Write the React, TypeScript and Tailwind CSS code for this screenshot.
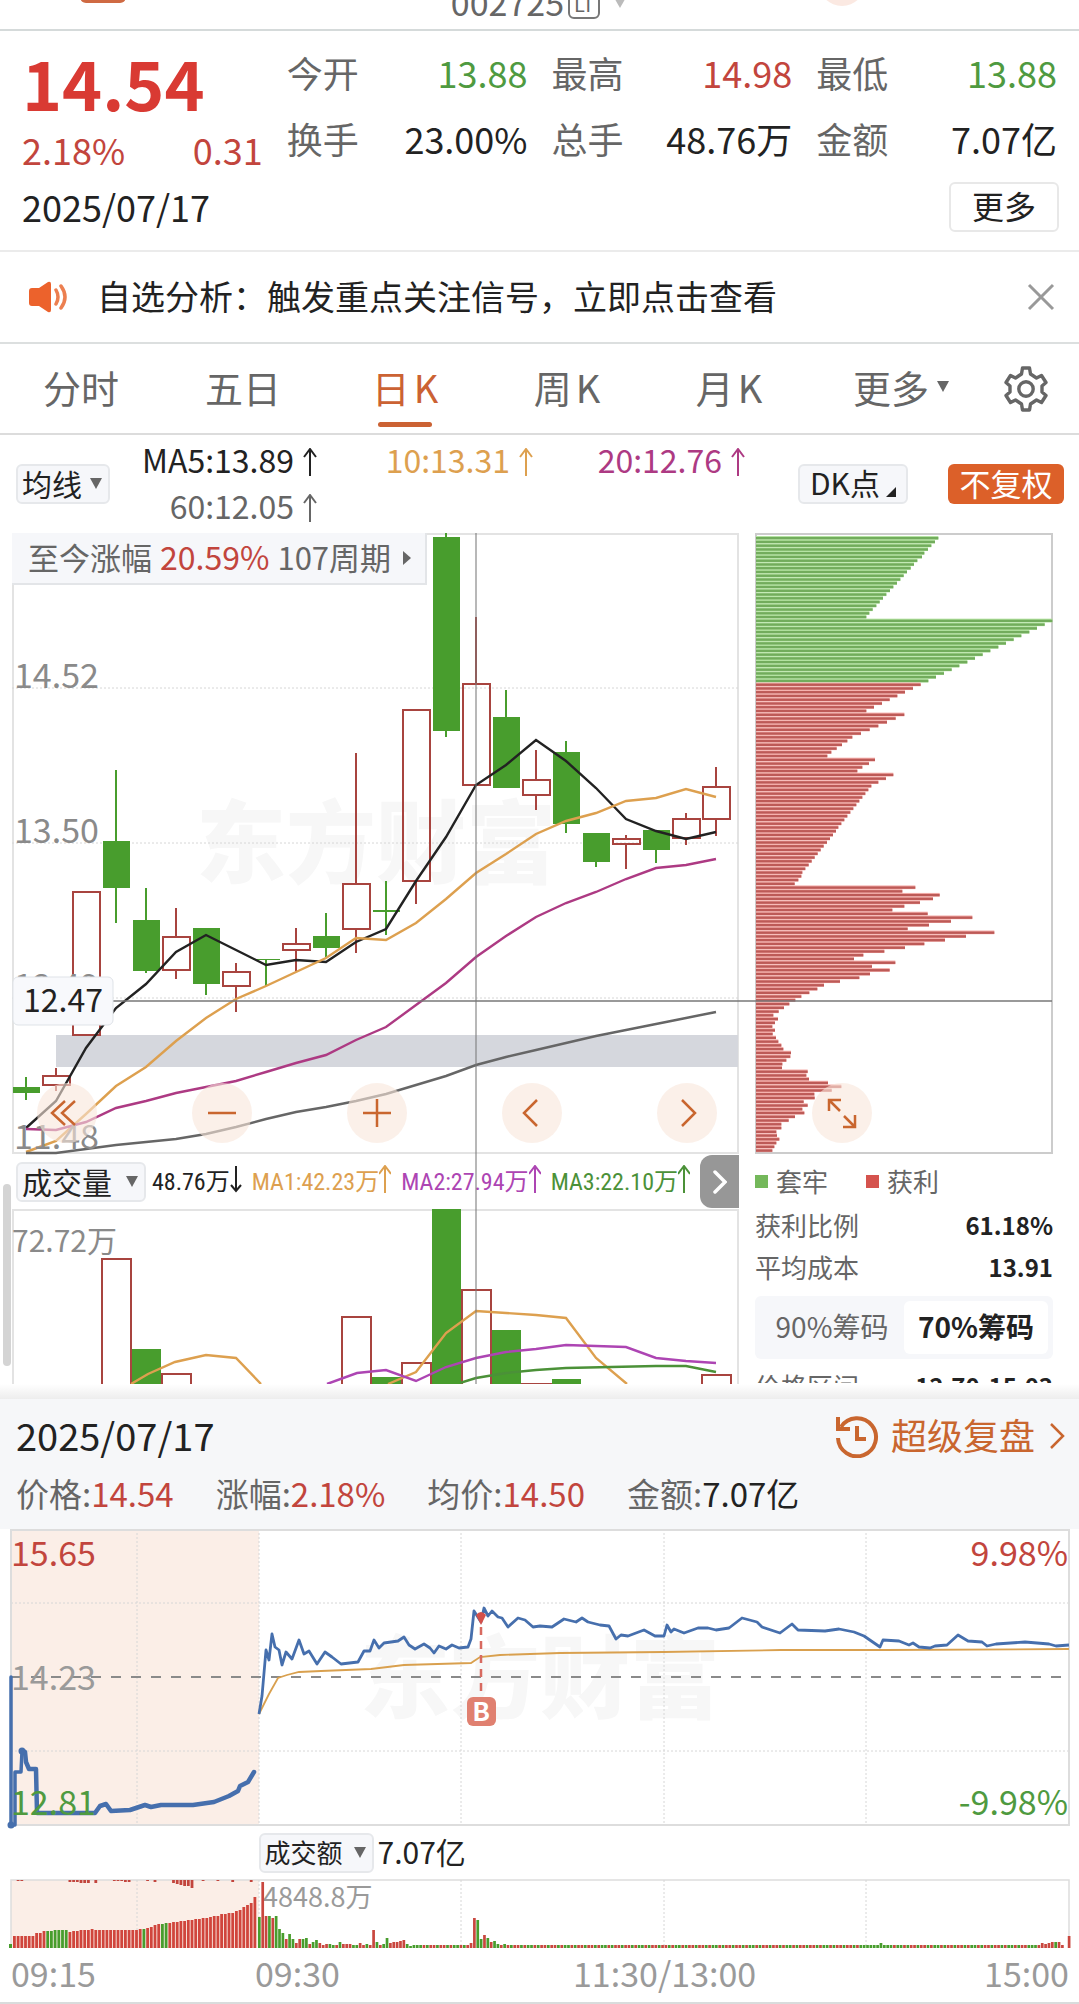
import React, { useState } from "react";

type Point = [number, number];

/** One daily candle: high, body top, body bottom and low as chart offsets */
interface Candle {
  up: boolean;
  high: number;
  top: number;
  bottom: number;
  low: number;
}

const RED = "#a8443f";
const GREEN = "#489d2d";
const GRID = "#d6d6d6";

const candle = (up: boolean, high: number, top: number, bottom: number, low: number): Candle => ({
  up,
  high,
  top,
  bottom,
  low,
});

const CANDLES: Candle[] = [
  candle(false, 544, 554, 560, 567),
  candle(true, 535, 543, 552, 558),
  candle(true, 359, 359, 502, 502),
  candle(false, 237, 308, 355, 390),
  candle(false, 355, 387, 438, 440),
  candle(true, 375, 404, 437, 446),
  candle(false, 395, 395, 451, 462),
  candle(true, 430, 439, 453, 479),
  candle(false, 426, 426, 427, 453),
  candle(true, 395, 411, 417, 438),
  candle(false, 380, 403, 415, 424),
  candle(true, 220, 351, 396, 420),
  candle(false, 348, 377, 379, 402),
  candle(true, 177, 177, 348, 371),
  candle(false, 0, 4, 198, 204),
  candle(true, 84, 151, 252, 252),
  candle(false, 157, 184, 255, 255),
  candle(true, 217, 247, 262, 277),
  candle(false, 208, 219, 291, 300),
  candle(false, 300, 300, 329, 334),
  candle(true, 302, 306, 311, 336),
  candle(false, 297, 297, 317, 330),
  candle(true, 280, 286, 305, 312),
  candle(true, 234, 254, 286, 303),
];

const MA_LINES = [
  {
    color: "#222222",
    values: [595, 568, 515, 475, 451, 419, 402, 417, 432, 427, 429, 409, 396, 348, 304, 252, 232, 207, 228, 255, 286, 298, 306, 299],
  },
  {
    color: "#dda04f",
    values: [619, 608, 581, 553, 534, 508, 485, 466, 453, 439, 425, 405, 407, 390, 366, 340, 321, 301, 288, 280, 268, 265, 256, 264],
  },
  {
    color: "#ad3a83",
    values: [596, 597, 589, 575, 568, 560, 554, 548, 539, 530, 522, 507, 494, 472, 450, 424, 403, 384, 370, 359, 346, 335, 332, 326],
  },
  {
    color: "#666666",
    values: [620, 620, 616, 612, 609, 606, 601, 594, 586, 579, 574, 568, 561, 552, 543, 532, 524, 517, 510, 503, 497, 491, 485, 479],
  },
];

/** Chip distribution, top price first, 889 = full width */
const CHIPS = [
  547, 537, 526, 516, 505, 498, 484, 474, 464, 453, 443, 433, 423, 412, 402, 391, 381, 371, 361, 350, 340, 331, 889, 866,
  843, 820, 796, 773, 750, 727, 703, 680, 657, 634, 610, 587, 564, 540, 517, 494, 471, 447, 424, 401, 378, 354, 331, 445,
  419, 393, 367, 341, 315, 289, 274, 258, 242, 226, 214, 357, 339, 319, 304, 412, 390, 367, 346, 337, 328, 319, 310, 301,
  292, 283, 274, 265, 256, 247, 240, 231, 222, 213, 203, 194, 185, 176, 167, 158, 148, 139, 136, 127, 116, 478, 439, 551,
  531, 492, 445, 409, 515, 649, 585, 519, 455, 715, 630, 567, 505, 447, 385, 322, 294, 418, 348, 401, 342, 310, 252, 204,
  184, 160, 136, 118, 100, 84, 68, 52, 66, 57, 49, 57, 50, 60, 67, 76, 82, 105, 103, 91, 79, 78, 155, 151, 159, 216, 256,
  227, 175, 176, 143, 155, 139, 145, 117, 98, 76, 76, 61, 63, 70, 61, 55, 49,
];
const TRAPPED_COUNT = 39;

const VOLUME_BARS: { index: number; up: boolean; top: number }[] = [
  { index: 3, up: true, top: 49 },
  { index: 4, up: false, top: 140 },
  { index: 5, up: true, top: 164 },
  { index: 11, up: true, top: 107 },
  { index: 12, up: false, top: 168 },
  { index: 13, up: true, top: 153 },
  { index: 14, up: false, top: 0 },
  { index: 15, up: true, top: 80 },
  { index: 16, up: false, top: 121 },
  { index: 17, up: true, top: 174 },
  { index: 18, up: false, top: 170 },
  { index: 23, up: true, top: 165 },
];

const VOLUME_LINES: { color: string; points: Point[] }[] = [
  { color: "#dda04f", points: [[119, 175], [136, 165], [163, 153], [194, 146], [224, 149], [249, 175]] },
  {
    color: "#dda04f",
    points: [[376, 175], [404, 163], [434, 124], [464, 102], [494, 104], [524, 106], [554, 109], [584, 149], [615, 175]],
  },
  {
    color: "#ad45b3",
    points: [[315, 175], [345, 164], [374, 161], [404, 172], [434, 158], [464, 149], [494, 143], [524, 140], [554, 136], [614, 138], [644, 149], [674, 152], [704, 154]],
  },
  { color: "#4b9138", points: [[448, 174], [464, 169], [494, 164], [524, 161], [554, 159], [644, 157], [674, 157], [704, 163]] },
];

const AUCTION_LINE: Point[] = [
  [11, 222], [14, 223], [15, 233], [18, 240], [25, 240], [26, 284], [84, 284], [89, 277], [95, 275], [100, 282],
  [119, 281], [134, 276], [140, 278], [150, 276], [182, 276], [203, 273], [218, 267], [227, 262], [229, 257],
  [237, 253], [243, 243],
];

const PRICE_LINE: Point[] = [
  [248, 185], [251, 167], [255, 121], [258, 131], [261, 105], [264, 118], [268, 121], [271, 136], [275, 123], [281, 130],
  [288, 111], [293, 125], [298, 122], [306, 135], [314, 123], [321, 128], [330, 135], [347, 133], [353, 122], [359, 122],
  [363, 111], [368, 119], [373, 114], [387, 112], [393, 108], [398, 116], [404, 120], [413, 115], [419, 119], [423, 124],
  [428, 117], [435, 120], [441, 116], [448, 119], [457, 118], [460, 110], [463, 82], [470, 93], [473, 79], [477, 87],
  [481, 82], [487, 88], [491, 89], [497, 98], [507, 89], [514, 91], [522, 98], [529, 97], [541, 98], [553, 90], [565, 93],
  [571, 89], [577, 93], [589, 96], [598, 97], [605, 110], [610, 106], [617, 107], [633, 101], [644, 107], [653, 107],
  [656, 96], [660, 103], [663, 100], [673, 104], [687, 99], [697, 99], [705, 101], [718, 99], [731, 89], [746, 93],
  [751, 98], [769, 104], [781, 95], [787, 101], [814, 102], [828, 100], [843, 103], [853, 107], [869, 118], [872, 111],
  [888, 112], [898, 116], [902, 114], [908, 118], [919, 119], [924, 117], [936, 116], [947, 106], [957, 112], [971, 113],
  [976, 117], [985, 115], [1014, 113], [1038, 115], [1045, 117], [1058, 116],
];

const AVERAGE_LINE: Point[] = [
  [248, 185], [258, 165], [267, 149], [276, 146], [288, 143], [310, 142], [360, 140], [393, 136], [460, 134], [469, 128],
  [489, 126], [549, 124], [653, 123], [770, 121], [873, 121], [1058, 120],
];

/** Call auction volume heights */
const AUCTION_BARS = [
  12, 12, 12, 12, 12, 12, 15, 15, 17, 17, 17, 18, 18, 18, 18, 16, 17, 17, 18, 18, 18, 19, 18, 18, 18, 18, 18, 18, 18, 18,
  18, 18, 18, 18, 19, 19, 20, 21, 23, 24, 24, 25, 25, 26, 26, 27, 27, 28, 28, 29, 29, 30, 30, 31, 32, 32, 34, 34, 35, 35,
  37, 38, 41, 43, 45, 51,
];
const AUCTION_GREEN = [9, 10, 11, 12, 13, 14, 35, 40, 41];

/** Unmatched auction volume, hanging from the top edge */
const AUCTION_UNMATCHED: Point[] = [
  [1, 1], [2, 1], [15, 2], [16, 2], [17, 2], [18, 3], [19, 3], [20, 3], [22, 3], [27, 1], [28, 1], [29, 1], [30, 2],
  [31, 2], [36, 1], [38, 2], [43, 3], [44, 4], [45, 5], [46, 6], [47, 6], [48, 8], [51, 1], [55, 1], [59, 2], [64, 2],
];

/** Minute volume after the open; minus = falling minute */
const OPEN_BARS = [
  -31, 66, 32, -32, 30, -32, -19, -15, 9, -14, -9, 5, 9, -9, -10, 4, -6, -8, 5, 3, 4, -4, -3, 3, -6, 4, 4, 4, -3, -3, 5, 3,
  -4, 3, 18, -6, 3, -4, -10, 5, 6, 6, 7, 8, -4, -2, -3,
];
const MIDDAY_BARS = [5, 30, -28, -9, 13, -10, 6, -7, -4, 3, -4];
const CLOSE_BARS = [-3, -3, 3, 5, 4, 5, 6, -6, 6, 3, 0, 12];

function minuteVolume(index: number): number {
  if (index < 47) return OPEN_BARS[index];
  if (index >= 63 && index < 74) return MIDDAY_BARS[index - 63];
  if (index >= 230) return CLOSE_BARS[index - 230];
  if (index >= 181 && index < 188) return index === 185 ? -5 : -3;
  return (index * 7) % 11 < 6 ? 3 : -3;
}

const candleX = (index: number) => 14 + index * 30;
const toPoints = (points: Point[]) => points.map((p) => p.join(",")).join(" ");

function Arrow({ down = false, narrow = false }: { down?: boolean; narrow?: boolean }) {
  return (
    <svg
      viewBox={narrow ? "2 0 12 28" : "0 0 16 28"}
      className={`inline-block h-7 shrink-0 align-[-3px] ${narrow ? "w-3" : "ml-2 w-4"}`}
      fill="none"
      stroke="currentColor"
      strokeWidth="2"
    >
      {down ? <path d="M8 1v25M3 20l5 6 5-6" /> : <path d="M8 28V1M2 9l6-8 6 8" />}
    </svg>
  );
}

function Watermark({ x, y }: { x: number; y: number }) {
  return (
    <text x={x} y={y} fontSize="90" fontWeight="900" fill="#f7f7f7">
      东方财富
    </text>
  );
}

/** Small grey drop-down with a triangle */
function Picker({ label, options, className }: { label: string; options: string[]; className: string }) {
  return (
    <div className={`relative h-10 shrink-0 rounded-md border-2 border-[#e6e8eb] bg-[#f6f7fa] ${className}`}>
      <select aria-label={label} className="block h-full w-full appearance-none bg-transparent pb-0.5 pl-1 leading-8 text-[#222] outline-none">
        {options.map((option) => (
          <option key={option}>{option}</option>
        ))}
      </select>
      <svg viewBox="0 0 12 11" className="pointer-events-none absolute top-3 right-1.5 h-[11px] w-3">
        <path d="M0 0h12L6 11z" fill="#666" />
      </svg>
    </div>
  );
}

function Quote({ label, value, color = "text-[#222]" }: { label: string; value: string; color?: string }) {
  return (
    <div className="flex items-center justify-between">
      <dt className="text-[#666]">{label}</dt>
      <dd className={color}>{value}</dd>
    </div>
  );
}

function TopBar() {
  return (
    <header className="relative flex h-[31px] items-end justify-center overflow-hidden border-b-2 border-[#d5dada] pb-[9px] text-[#666]">
      <div className="absolute -top-4 left-20 h-[19px] w-[46px] rounded-md bg-[#cf6a43]" />
      <div className="flex items-end gap-1">
        <h1 className="text-[34px] leading-9">002725</h1>
        <span className="mb-px rounded-md border-2 border-[#777] px-1 text-[20px] leading-[26px]">LT</span>
        <svg viewBox="0 0 16 14" className="mb-3 ml-2 h-3.5 w-4">
          <path d="M0 0h16L8 14z" fill="#bbb" />
        </svg>
      </div>
      <div className="absolute -top-10 right-[214px] size-[46px] rounded-full bg-[#fbe9e2]" />
    </header>
  );
}

function Summary() {
  return (
    <section className="border-b-2 border-[#ebebeb] px-[22px] pt-2 pb-[18px] text-[36px]">
      <div className="grid grid-cols-4 gap-x-6">
        <div className="text-[#c2453d]">
          <p className="text-[68px] leading-[86px] font-bold text-[#d93a33]">14.54</p>
          <p className="flex justify-between leading-[48px]">
            <span>2.18%</span>
            <span>0.31</span>
          </p>
        </div>
        <dl className="col-span-3 grid auto-rows-[66px] grid-cols-3 gap-x-6">
          <Quote label="今开" value="13.88" color="text-[#4f9a40]" />
          <Quote label="最高" value="14.98" color="text-[#c2453d]" />
          <Quote label="最低" value="13.88" color="text-[#4f9a40]" />
          <Quote label="换手" value="23.00%" />
          <Quote label="总手" value="48.76万" />
          <Quote label="金额" value="7.07亿" />
        </dl>
      </div>
      <div className="-mr-0.5 flex items-start justify-between pt-2">
        <time className="leading-[50px] text-[#222]">2025/07/17</time>
        <button className="mt-px h-[50px] w-[110px] rounded-md border-2 border-[#e8e8e8] pb-1 text-[32px] leading-none text-[#222]">
          更多
        </button>
      </div>
    </section>
  );
}

function Notice() {
  return (
    <section className="flex h-[92px] items-center border-b-2 border-[#dcdfdf] pr-6 pl-[29px]">
      <svg viewBox="0 0 40 32" className="mr-7 h-8 w-10">
        <path d="M3 7h7L19 1q3-1 3 2v26q0 3-3 2l-9-6H3q-3 0-3-3V10q0-3 3-3z" fill="#ec622c" />
        <path d="M27 9q4 7 0 14M32 5q8 11 0 22" fill="none" stroke="#ec7f50" strokeWidth="3.500" strokeLinecap="round" />
      </svg>
      <p className="flex-1 pb-1 text-[34px] text-[#222]">自选分析：触发重点关注信号，立即点击查看</p>
      <button aria-label="关闭">
        <svg viewBox="0 0 28 28" className="size-7" fill="none" stroke="#999" strokeWidth="3">
          <path d="M2 2l24 24M26 2L2 26" />
        </svg>
      </button>
    </section>
  );
}

const PERIODS = ["分时", "五日", "日K", "周K", "月K"];

function PeriodTabs() {
  const [active, setActive] = useState("日K");
  return (
    <nav className="grid h-[91px] grid-cols-[repeat(5,162fr)_182fr_87fr] border-b-2 border-[#dcdcdc] text-[38px] text-[#666]">
      {PERIODS.map((period) => (
        <button
          key={period}
          onClick={() => setActive(period)}
          className={`relative pb-1 ${period === active ? "text-[#cb6233]" : ""}`}
        >
          {period.endsWith("K") ? (
            <>
              {period[0]}
              <span className="ml-1">K</span>
            </>
          ) : (
            period
          )}
          {period === active && <span className="absolute bottom-1.5 left-1/2 h-[5px] w-[54px] -translate-x-1/2 rounded-full bg-[#cb6233]" />}
        </button>
      ))}
      <button className="flex items-center justify-center gap-2 pb-1">
        更多
        <svg viewBox="0 0 12 11" className="h-[11px] w-3">
          <path d="M0 0h12L6 11z" fill="#666" />
        </svg>
      </button>
      <button aria-label="设置" className="flex items-center justify-center pr-5">
        <svg viewBox="0 0 46 46" className="size-[46px]" fill="none" stroke="#666" strokeWidth="3.400" strokeLinejoin="round">
          <path d="M19.500 2h7l1 6 6 4 5-2.500 4.500 7-4 3.500v6l4 3.500-4.500 7-5-2.500-6 4-1 6h-7l-1-6-6-4-5 2.500-4.500-7 4-3.500v-6l-4-3.500 4.500-7 5 2.500 6-4z" />
          <circle cx="23" cy="23" r="7.200" />
        </svg>
      </button>
    </nav>
  );
}

function AverageBar() {
  return (
    <section className="flex h-[98px] items-center pr-[15px] pl-4 text-[30px]">
      <Picker label="指标" options={["均线", "BOLL"]} className="w-[94px]" />
      <div className="grid flex-1 auto-rows-[46px] grid-cols-3 items-center pb-1 text-right text-[32px] whitespace-nowrap">
        <span className="pr-1 text-[#222]">
          MA5:13.89
          <Arrow />
        </span>
        <span className="text-[#dda04f]">
          10:13.31
          <Arrow />
        </span>
        <span className="text-[#ad3a83]">
          20:12.76
          <Arrow />
        </span>
        <span className="pr-1 text-[#666]">
          60:12.05
          <Arrow />
        </span>
      </div>
      <button className="ml-[52px] flex h-10 w-[110px] items-center justify-center gap-1.5 rounded-md border-2 border-[#e6e8eb] bg-[#f6f7fa] pb-1 leading-none text-[#222]">
        DK点
        <svg viewBox="0 0 10 10" className="mt-5 size-2.5">
          <path d="M10 0v10H0z" fill="#222" />
        </svg>
      </button>
      <button className="ml-10 h-10 w-[116px] rounded-md bg-[#dc6029] pb-1 text-[31px] leading-none text-white">不复权</button>
    </section>
  );
}

const ROUND_BUTTONS = [
  { label: "最早", path: "M28 18L15 30l13 12M38 18L25 30l13 12" },
  { label: "缩小", path: "M16 30h28" },
  { label: "放大", path: "M16 30h28M30 16v28" },
  { label: "前一日", path: "M35 17L22 30l13 13" },
  { label: "后一日", path: "M25 17l13 13-13 13" },
];

function RoundButton({ label, path }: { label: string; path: string }) {
  return (
    <button aria-label={label} className="size-[60px] rounded-full bg-[#f9e6db]/60">
      <svg viewBox="0 0 60 60" className="size-full" fill="none" stroke="#c9662f" strokeWidth="2.500">
        <path d={path} />
      </svg>
    </button>
  );
}

function KLineChart() {
  return (
    <div className="relative">
      <svg viewBox="0 0 727 621" className="block w-full overflow-visible">
        <Watermark x={184} y={343} />
        <rect x="1" y="1" width="725" height="619" fill="none" stroke="#e3e3e3" strokeWidth="2" />
        {[155, 310, 465].map((y) => (
          <line key={y} x1="0" x2="727" y1={y} y2={y} stroke={GRID} strokeDasharray="2 2" />
        ))}
        <rect x="44" y="502" width="682" height="32" fill="#d5d7dd" />
        {CANDLES.map((c, i) => {
          const color = c.up ? RED : GREEN;
          const height = Math.max(c.bottom - c.top, 1);
          return (
            <g key={i} stroke={color} strokeWidth="2">
              <line x1={candleX(i)} x2={candleX(i)} y1={c.high} y2={c.top} />
              <line x1={candleX(i)} x2={candleX(i)} y1={c.bottom} y2={c.low} />
              {c.up ? (
                <rect x={candleX(i) - 13} y={c.top} width="27" height={height} fill="none" />
              ) : (
                <rect x={candleX(i) - 13} y={c.top} width="27" height={height} fill={color} stroke="none" />
              )}
            </g>
          );
        })}
        {MA_LINES.map((line) => (
          <polyline
            key={line.color}
            points={toPoints(line.values.map((v, i): Point => [candleX(i), v]))}
            fill="none"
            stroke={line.color}
            strokeWidth="2.400"
          />
        ))}
        <line x1="464" x2="464" y1="0" y2="676" stroke="#777" strokeOpacity="0.7" strokeWidth="1.500" />
        <line x1="100" x2="743" y1="468" y2="468" stroke="#777" strokeWidth="1.500" />
        <g fontSize="34" fill="#8a8a8a">
          <text x="2" y="155">14.52</text>
          <text x="2" y="310">13.50</text>
          <text x="2" y="465">12.49</text>
          <text x="2" y="616">11.48</text>
        </g>
        <rect x="1" y="444" width="100" height="48" rx="5" fill="#f8f9fc" stroke="#dfe3e8" />
        <text x="51" y="479" fontSize="32" textAnchor="middle" fill="#222">
          12.47
        </text>
      </svg>
      <button className="absolute top-0 left-0 flex h-[52px] items-center gap-2 border-r-2 border-b-2 border-[#e3e5e8] bg-[#f6f7fa] pr-3.5 pb-1 pl-4 text-[31px] leading-none whitespace-nowrap text-[#666]">
        至今涨幅<span className="text-[32px] text-[#c2453d]">20.59%</span>107周期
        <svg viewBox="0 0 8 14" className="mt-1 ml-1 h-3.5 w-2">
          <path d="M0 0l8 7-8 7z" fill="#666" />
        </svg>
      </button>
      <div className="absolute right-[22px] bottom-[11px] left-[25px] flex justify-between">
        {ROUND_BUTTONS.map((b) => (
          <RoundButton key={b.label} label={b.label} path={b.path} />
        ))}
      </div>
    </div>
  );
}

function VolumeHeader() {
  return (
    <div className="flex h-[55px] items-center gap-1.5 pl-1 text-[24px] whitespace-nowrap">
      <Picker label="副图指标" options={["成交量", "MACD"]} className="w-[130px] text-[30px]" />
      <div className="flex flex-1 justify-between pr-1 font-['Liberation_Sans_Narrow','Roboto_Condensed','Noto_Sans_CJK_SC',sans-serif]">
        <span className="text-[#222]">
          48.76万
          <Arrow down narrow />
        </span>
        <span className="text-[#dda04f]">
          MA1:42.23万
          <Arrow narrow />
        </span>
        <span className="text-[#ad45b3]">
          MA2:27.94万
          <Arrow narrow />
        </span>
        <span className="text-[#4b9138]">
          MA3:22.10万
          <Arrow narrow />
        </span>
      </div>
      <button aria-label="更多指标" className="flex h-[53px] w-[39px] shrink-0 items-center justify-center rounded-l-xl bg-[#979797]">
        <svg viewBox="0 0 14 24" className="h-6 w-3.5" fill="none" stroke="white" strokeWidth="3.500" strokeLinecap="round">
          <path d="M2 2l10 10L2 22" />
        </svg>
      </button>
    </div>
  );
}

function VolumeChart() {
  return (
    <svg viewBox="0 0 727 175" className="block w-full">
      <path d="M1 175V1h725v174" fill="none" stroke="#e3e3e3" strokeWidth="2" />
      <text x="0" y="43" fontSize="30" fill="#8a8a8a">
        72.72万
      </text>
      {VOLUME_BARS.map((bar) =>
        bar.up ? (
          <rect key={bar.index} x={candleX(bar.index) - 14} y={bar.top + 1} width="29" height="190" fill="white" stroke={RED} strokeWidth="2" />
        ) : (
          <rect key={bar.index} x={candleX(bar.index) - 14} y={bar.top} width="29" height="190" fill={GREEN} />
        ),
      )}
      {VOLUME_LINES.map((line, i) => (
        <polyline key={i} points={toPoints(line.points)} fill="none" stroke={line.color} strokeWidth="2.400" />
      ))}
      <line x1="464" x2="464" y1="0" y2="175" stroke="#777" strokeOpacity="0.7" strokeWidth="1.500" />
    </svg>
  );
}

function ChipChart() {
  const step = 3.757;
  return (
    <div className="relative">
      <svg viewBox="0 0 298 621" className="block w-full">
        <rect x="1" y="1" width="296" height="619" fill="none" stroke="#cccccc" strokeWidth="2" />
        {CHIPS.map((chip, i) => {
          const trapped = i < TRAPPED_COUNT;
          return (
            <g key={i}>
              <rect x="1" y={3 + i * step} width={chip / 3} height={step} fill={trapped ? "#b4e3a2" : "#f5b0ac"} />
              <rect x="1" y={4 + i * step} width={chip / 3} height="2.400" fill={trapped ? "#72ac5c" : "#bd5a57"} />
            </g>
          );
        })}
        <line x1="0" x2="297" y1="468" y2="468" stroke="#777" strokeWidth="1.500" />
      </svg>
      <div className="absolute bottom-[11px] left-[57px] flex">
        <RoundButton label="全屏" path="M28 28L17 17M17 28V17h12M32 33l11 11M43 32v12H31" />
      </div>
    </div>
  );
}

function ChipPanel() {
  const [range, setRange] = useState("70%筹码");
  return (
    <div className="min-w-0 flex-[298] text-[26px] text-[#666]">
      <ChipChart />
      <div className="flex gap-[38px] pt-1.5 leading-[42px]">
        <span className="flex items-center gap-2">
          <i className="size-[13px] bg-[#74b85b]" />
          套牢
        </span>
        <span className="flex items-center gap-2">
          <i className="size-[13px] bg-[#d5534e]" />
          获利
        </span>
      </div>
      <dl className="mt-0.5 leading-[42px]">
        <div className="flex justify-between">
          <dt>获利比例</dt>
          <dd className="text-[24px] font-bold text-[#222]">61.18%</dd>
        </div>
        <div className="flex justify-between">
          <dt>平均成本</dt>
          <dd className="text-[24px] font-bold text-[#222]">13.91</dd>
        </div>
      </dl>
      <div className="mt-2 flex h-[63px] rounded-md bg-[#f6f7fa] p-[5px] text-[28px] whitespace-nowrap">
        {["90%筹码", "70%筹码"].map((item) => (
          <button
            key={item}
            aria-pressed={item === range}
            onClick={() => setRange(item)}
            className={`flex-1 rounded-md pb-1 leading-none ${item === range ? "bg-white font-bold text-[#222]" : ""}`}
          >
            {item}
          </button>
        ))}
      </div>
      <div className="mt-3 flex h-3 justify-between overflow-hidden leading-[30px]">
        <span>价格区间</span>
        <span className="text-[24px] font-bold text-[#222]">12.70-15.03</span>
      </div>
    </div>
  );
}

function ReplayHeader() {
  return (
    <section className="bg-[#f6f7f9] pt-1 pr-3.5 pb-2 pl-4">
      <div className="flex h-[62px] items-center justify-between">
        <time className="text-[38px] text-[#222]">2025/07/17</time>
        <a href="#replay" className="flex items-center text-[36px] text-[#c9662f]">
          <svg viewBox="0 0 44 44" className="mt-1 mr-3 size-11" fill="none" stroke="currentColor" strokeWidth="4">
            <path d="M6 13a19 19 0 1 1-3 11" />
            <path d="M3 3v12h12" />
            <path d="M22 12v13h9" />
          </svg>
          超级复盘
          <svg viewBox="0 0 16 26" className="mt-1 ml-3.5 h-[26px] w-4" fill="none" stroke="currentColor" strokeWidth="2.500">
            <path d="M2 1l12 12L2 25" />
          </svg>
        </a>
      </div>
      <p className="flex gap-[42px] text-[33px] leading-[56px] text-[#666]">
        <span>
          价格:<b className="font-normal text-[#c2453d]">14.54</b>
        </span>
        <span>
          涨幅:<b className="font-normal text-[#c2453d]">2.18%</b>
        </span>
        <span>
          均价:<b className="font-normal text-[#c2453d]">14.50</b>
        </span>
        <span>
          金额:<b className="font-normal text-[#222]">7.07亿</b>
        </span>
      </p>
    </section>
  );
}

function MinuteChart() {
  return (
    <svg viewBox="0 0 1058 297" className="block w-full overflow-visible">
      <rect x="0" y="0" width="248" height="296" fill="#fbeee7" />
      <Watermark x={349} y={182} />
      <g stroke={GRID} strokeDasharray="2 2">
        {[126, 248, 450, 653, 855].map((x) => (
          <line key={x} x1={x} x2={x} y1="0" y2="296" />
        ))}
        <line x1="0" x2="1058" y1="74" y2="74" />
        <line x1="0" x2="1058" y1="222" y2="222" />
      </g>
      <rect x="0" y="1" width="1058" height="295" fill="none" stroke="#dddddd" strokeWidth="2" />
      <line x1="0" x2="1058" y1="148" y2="148" stroke="#8a8a8a" strokeWidth="2" strokeDasharray="10 10" />
      <g fontSize="34">
        <text x="0" y="37" fill="#c2453d">15.65</text>
        <text x="0" y="161" fill="#9a9a9a">14.23</text>
        <text x="1057" y="37" textAnchor="end" fill="#c2453d">9.98%</text>
        <text x="1057" y="286" textAnchor="end" fill="#4f9a40">-9.98%</text>
      </g>
      <g fill="none" stroke="#466fad" strokeLinejoin="round" strokeLinecap="round">
        <path d="M0 148V296H4V243H10L11 222" strokeWidth="3.500" />
        <polyline points={toPoints(AUCTION_LINE)} strokeWidth="4.500" />
      </g>
      <circle cx="0" cy="296" r="3.500" fill="#466fad" />
      <circle cx="11" cy="222" r="3.500" fill="#466fad" />
      <text x="0" y="286" fontSize="34" fill="#4f9a40">12.81</text>
      <polyline points={toPoints(AVERAGE_LINE)} fill="none" stroke="#d9a04e" strokeWidth="1.800" />
      <polyline points={toPoints(PRICE_LINE)} fill="none" stroke="#466fad" strokeWidth="2.800" strokeLinejoin="round" />
      <path d="M465 86q5-6 10 0l-5 10z" fill="#d4504a" />
      <line x1="470" x2="470" y1="98" y2="166" stroke="#d86a60" strokeWidth="2.500" strokeDasharray="8 6" />
      <rect x="456" y="168" width="29" height="29" rx="6" fill="#e08070" />
      <text x="470" y="192" fontSize="26" fontWeight="700" textAnchor="middle" fill="white">
        B
      </text>
    </svg>
  );
}

function TurnoverChart() {
  return (
    <svg viewBox="0 0 1058 68" className="block w-full overflow-visible">
      <rect x="0" y="0" width="248" height="68" fill="#fbeee7" />
      <path d="M0 68V0h1058v68" fill="none" stroke="#dddddd" strokeWidth="1.500" />
      {[126, 248, 450, 653, 855].map((x) => (
        <line key={x} x1={x} x2={x} y1="0" y2="68" stroke={GRID} strokeDasharray="2 2" />
      ))}
      <text x="252" y="27" fontSize="27" fill="#9a9a9a">
        4848.8万
      </text>
      <rect x="-2" y="64" width="3" height="4" fill={GREEN} />
      {AUCTION_BARS.map((height, i) => (
        <rect key={i} x={2 + i * 3.7} y={68 - height} width="2.800" height={height} fill={AUCTION_GREEN.includes(i) ? GREEN : "#d0453c"} />
      ))}
      {AUCTION_UNMATCHED.map(([i, height]) => (
        <rect key={i} x={2 + i * 3.7} y="0" width="2.800" height={height} fill="#c2453d" />
      ))}
      {Array.from({ length: 242 }, (_, i) => {
        const volume = minuteVolume(i);
        const height = Math.abs(volume);
        return <rect key={i} x={247 + i * 3.36} y={68 - height} width="2.700" height={height} fill={volume < 0 ? GREEN : "#c9473f"} />;
      })}
    </svg>
  );
}

export default function App() {
  return (
    <main className="w-full overflow-x-hidden bg-white font-['Noto_Sans_CJK_SC',sans-serif]">
      <TopBar />
      <Summary />
      <Notice />
      <PeriodTabs />
      <AverageBar />

      {/* Daily K line, volume and chip distribution */}
      <section className="relative flex gap-4 pr-[26px] pl-3">
        <div className="absolute bottom-[18px] left-[3px] h-[182px] w-2 rounded-full bg-[#d4d4d4]" />
        <div className="min-w-0 flex-[727]">
          <KLineChart />
          <VolumeHeader />
          <VolumeChart />
        </div>
        <ChipPanel />
      </section>
      <div className="h-[15px] bg-linear-to-b from-white to-[#ededed]" />

      {/* Minute chart of the selected day */}
      <ReplayHeader />
      <section className="border-b-2 border-[#d9dcdc] pr-2.5 pl-[11px]">
        <MinuteChart />
        <div className="flex h-[54px] items-center gap-1 pl-[23.400%]">
          <Picker label="分时副图" options={["成交额", "成交量"]} className="w-[115px] text-[26px]" />
          <span className="pb-1 text-[30px] text-[#222]">7.07亿</span>
        </div>
        <TurnoverChart />
        <div className="grid h-[54px] grid-cols-[244fr_318fr_330fr_166fr] items-center pb-1 text-[34px] leading-10 text-[#9a9a9a]">
          <span>09:15</span>
          <span>09:30</span>
          <span>11:30/13:00</span>
          <span className="text-right">15:00</span>
        </div>
      </section>
    </main>
  );
}
